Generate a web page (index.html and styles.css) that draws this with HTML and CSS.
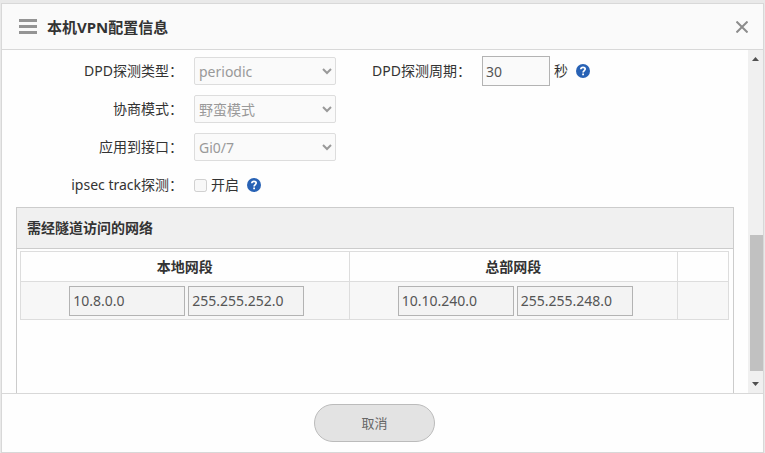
FILE: index.html
```html
<!DOCTYPE html>
<html lang="zh-CN">
<head>
<meta charset="utf-8">
<meta name="viewport" content="width=device-width, initial-scale=1">
<title>本机VPN配置信息</title>
<link rel="stylesheet" href="styles.css">
</head>
<body>
<section class="dialog" role="dialog" aria-labelledby="dialog-title">
  <header class="dialog-header">
    <svg class="menu-icon" viewBox="0 0 18 15" width="18" height="15" aria-hidden="true"><path d="M0 0h18v3H0zM0 6h18v3H0zM0 12h18v3H0z" fill="#949494"/></svg>
    <h1 class="dialog-title" id="dialog-title">本机VPN配置信息</h1>
    <button class="close" type="button" aria-label="关闭">
      <svg viewBox="0 0 12 12" width="12" height="12" aria-hidden="true"><path d="M.5 .5l11 11M11.5 .5l-11 11" stroke="#8c8c8c" stroke-width="2" fill="none"/></svg>
    </button>
  </header>

  <div class="dialog-body">
    <div class="content">
      <form class="form">
        <div class="row">
          <label class="label" for="dpd-type">DPD探测类型：</label>
          <select class="select" id="dpd-type" disabled><option>periodic</option></select>
          <label class="label" for="dpd-period">DPD探测周期：</label>
          <div class="field">
            <input class="input input-short" id="dpd-period" type="text" value="30" disabled>
            <span class="unit">秒</span>
            <button class="help" type="button" aria-label="帮助">
              <svg viewBox="0 0 14 14" width="14" height="14" aria-hidden="true"><circle cx="7" cy="7" r="7" fill="#2862b5"/><path d="M4.8 5.3C4.9 3.9 5.8 3.3 7 3.3c1.300 0 2.200.7 2.200 1.800C9.200 6.500 7.100 6.700 7.100 8.500" fill="none" stroke="#fff" stroke-width="1.700"/><path d="M6.200 9.600h1.800v1.700H6.200z" fill="#fff"/></svg>
            </button>
          </div>
        </div>
        <div class="row">
          <label class="label" for="mode">协商模式：</label>
          <select class="select" id="mode" disabled><option>野蛮模式</option></select>
        </div>
        <div class="row">
          <label class="label" for="port">应用到接口：</label>
          <select class="select" id="port" disabled><option>Gi0/7</option></select>
        </div>
        <div class="row">
          <span class="label">ipsec track探测：</span>
          <div class="field">
            <input class="check" id="track" type="checkbox" disabled>
            <label for="track">开启</label>
            <button class="help" type="button" aria-label="帮助">
              <svg viewBox="0 0 14 14" width="14" height="14" aria-hidden="true"><circle cx="7" cy="7" r="7" fill="#2862b5"/><path d="M4.8 5.3C4.9 3.9 5.8 3.3 7 3.3c1.300 0 2.200.7 2.200 1.800C9.200 6.500 7.100 6.700 7.100 8.500" fill="none" stroke="#fff" stroke-width="1.700"/><path d="M6.200 9.600h1.800v1.700H6.200z" fill="#fff"/></svg>
            </button>
          </div>
        </div>
      </form>

      <section class="panel">
        <h2 class="panel-title">需经隧道访问的网络</h2>
        <div class="panel-body">
          <table class="networks">
            <colgroup><col><col><col class="col-action"></colgroup>
            <thead>
              <tr><th scope="col">本地网段</th><th scope="col">总部网段</th><td></td></tr>
            </thead>
            <tbody>
              <tr>
                <td><div class="pair"><input class="input" type="text" value="10.8.0.0" aria-label="本地网段地址" disabled><input class="input" type="text" value="255.255.252.0" aria-label="本地网段掩码" disabled></div></td>
                <td><div class="pair"><input class="input" type="text" value="10.10.240.0" aria-label="总部网段地址" disabled><input class="input" type="text" value="255.255.248.0" aria-label="总部网段掩码" disabled></div></td>
                <td></td>
              </tr>
            </tbody>
          </table>
        </div>
      </section>
    </div>
    <div class="scrollbar" aria-hidden="true">
      <svg viewBox="0 0 7 4" width="7" height="4"><path d="M0 4L3.500 0L7 4z" fill="#505050"/></svg>
      <div class="track"><div class="thumb"></div></div>
      <svg viewBox="0 0 7 4" width="7" height="4"><path d="M0 0L3.500 4L7 0z" fill="#505050"/></svg>
    </div>
  </div>

  <footer class="dialog-footer">
    <button class="cancel" type="button">取消</button>
  </footer>
</section>
</body>
</html>
```
FILE: styles.css
```css
* {
  box-sizing: border-box;
}

body {
  margin: 0;
  background: #e9e9e9;
  color: #333;
  font: 14px/20px "Noto Sans", "Noto Sans CJK SC", sans-serif;
}

button,
input,
select {
  font: inherit;
}

svg {
  display: block;
}

.dialog {
  display: flex;
  flex-direction: column;
  height: calc(100vh - 3px);
  margin: 3px 1px 0;
  border: 1px solid #d8d8d8;
  background: #fefefe;
}

.dialog-header {
  display: flex;
  align-items: center;
  gap: 10px;
  height: 46px;
  padding: 0 15px 0 17px;
  border-bottom: 1px solid #d8d8d8;
  background: #fafafa;
}

.dialog-title {
  margin: 0;
  font-size: 15px;
}

.close {
  margin-left: auto;
  padding: 0;
  border: 0;
  background: none;
}

.dialog-body {
  display: flex;
  flex: 1;
  min-height: 0;
}

.content {
  display: flex;
  flex: 1;
  flex-direction: column;
  min-width: 0;
  padding: 2px 14px 0 0;
  overflow: hidden;
}

.row {
  display: grid;
  grid-template-columns: 181px 142px 124px auto;
  column-gap: 11px;
  align-items: center;
  height: 38px;
}

.label {
  text-align: right;
  white-space: nowrap;
}

.select {
  width: 100%;
  height: 28px;
  padding: 0;
  border: 1px solid #ddd;
  border-radius: 2px;
  background: #fafafa;
  color: #999;
  opacity: 1;
}

.field {
  display: flex;
  align-items: center;
  gap: 4px;
}

.input {
  width: 116px;
  height: 30px;
  padding: 0 3px;
  border: 1px solid #b3b3b3;
  background: #f3f3f3;
  color: #555;
}

.input-short {
  width: 68px;
  background: #fafafa;
}

.check {
  width: 13px;
  height: 13px;
  margin: 0;
}

.help {
  margin-left: 4px;
  padding: 0;
  border: 0;
  background: none;
}

.panel {
  flex: 1;
  margin: 3px 0 0 14px;
  border: 1px solid #ccc;
  border-bottom: 0;
}

.panel-title {
  margin: 0;
  padding: 10px;
  border-bottom: 1px solid #ccc;
  background: #f0f0f0;
  font-size: 14px;
}

.panel-body {
  padding: 2px 4px 0 3px;
}

.networks {
  width: 100%;
  border-collapse: collapse;
  table-layout: fixed;
}

.col-action {
  width: 51px;
}

.networks th,
.networks td {
  height: 30px;
  padding: 0;
  border: 1px solid #ddd;
}

.networks tbody td {
  height: 38px;
  background: #f7f7f7;
}

.pair {
  display: flex;
  justify-content: center;
  gap: 3px;
  padding-left: 4px;
}

.scrollbar {
  display: flex;
  flex-direction: column;
  align-items: center;
  width: 15px;
  padding: 7px 0;
  background: #f0f0f0;
}

.track {
  display: flex;
  flex: 1;
  flex-direction: column;
  justify-content: flex-end;
  width: 100%;
  padding: 0 0 11px 2px;
}

.thumb {
  height: 44%;
  background: #c1c1c1;
}

.dialog-footer {
  display: flex;
  align-items: center;
  justify-content: center;
  height: 59px;
  padding-right: 16px;
  border-top: 1px solid #d8d8d8;
}

.cancel {
  width: 121px;
  height: 38px;
  border: 1px solid #bbb;
  border-radius: 19px;
  background: #e3e3e3;
  color: #666;
  font-size: 13px;
}
```
